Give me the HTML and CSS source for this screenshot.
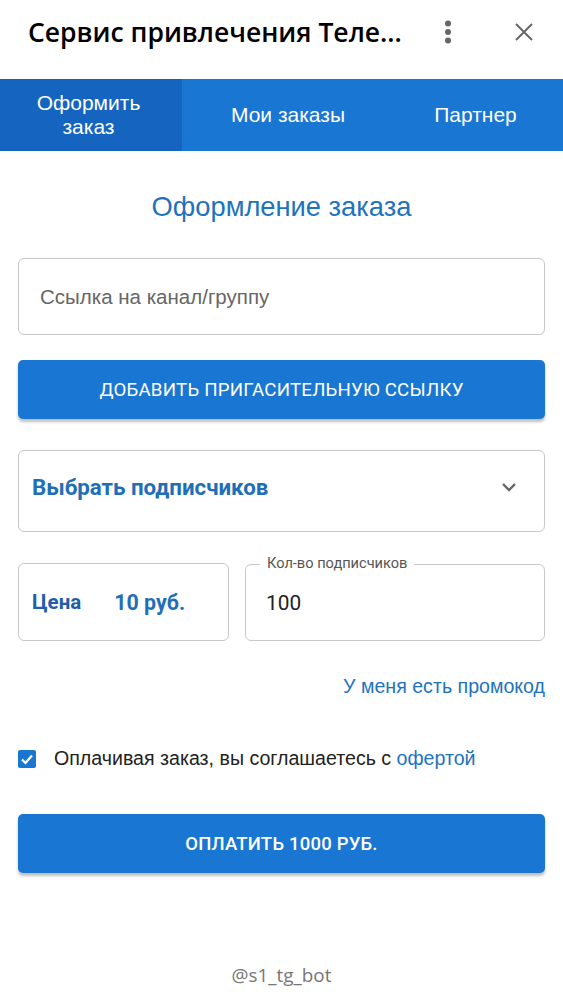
FILE: index.html
```html
<!DOCTYPE html>
<html lang="ru">
<head>
<meta charset="utf-8">
<link rel="stylesheet" href="styles.css">
</head>
<body>
<header class="topbar">
  <h1 class="title">Сервис привлечения Теле...</h1>
  <div class="actions">
    <svg class="kebab" width="8" height="24" viewBox="0 0 8 24"><circle cx="4" cy="3.5" r="3" fill="#666"/><circle cx="4" cy="12" r="3" fill="#666"/><circle cx="4" cy="20.5" r="3" fill="#666"/></svg>
    <svg class="close" width="20" height="20" viewBox="0 0 20 20"><path d="M2 2L18 18M18 2L2 18" stroke="#666" stroke-width="2" fill="none"/></svg>
  </div>
</header>
<nav class="tabs">
  <div class="tab active">Оформить<br>заказ</div>
  <div class="tab">Мои заказы</div>
  <div class="tab">Партнер</div>
</nav>
<main class="content">
  <h2 class="heading">Оформление заказа</h2>
  <div class="field link-field"><span class="placeholder">Ссылка на канал/группу</span></div>
  <button class="btn btn-add">ДОБАВИТЬ ПРИГАСИТЕЛЬНУЮ ССЫЛКУ</button>
  <div class="field select-field">
    <span class="select-label">Выбрать подписчиков</span>
    <svg class="chevron" width="16" height="10" viewBox="0 0 16 10"><path d="M2 2L8 8L14 2" stroke="#666" stroke-width="2.4" fill="none"/></svg>
  </div>
  <div class="row">
    <div class="field price-field"><span class="price-label">Цена</span><span class="price-value">10 руб.</span></div>
    <div class="field qty-field"><span class="legend">Кол-во подписчиков</span><span class="qty-value">100</span></div>
  </div>
  <div class="promo-row"><a class="promo">У меня есть промокод</a></div>
  <label class="agree">
    <span class="checkbox"><svg width="18" height="18" viewBox="0 0 18 18"><path d="M4 9.5L7.5 13L14 5.5" stroke="#fff" stroke-width="2.2" fill="none"/></svg></span>
    <span class="agree-text">Оплачивая заказ, вы соглашаетесь с <a class="offer">офертой</a></span>
  </label>
  <button class="btn btn-pay">ОПЛАТИТЬ 1000 РУБ.</button>
</main>
<footer class="footer">@s1_tg_bot</footer>
</body>
</html>
```
FILE: styles.css
```css
* { box-sizing: border-box; }
html, body { margin: 0; padding: 0; background: #fff; }
body { width: 563px; height: 1000px; font-family: "Liberation Sans", Arial, sans-serif; display: flex; flex-direction: column; }
.topbar { height: 79px; display: flex; align-items: center; justify-content: space-between; padding: 0 28px 0 28px; }
.title { margin: 0; font-family: "Open Sans", sans-serif; font-weight: 600; font-size: 26.5px; color: #000; letter-spacing: 0; margin-top: -16px; }
.actions { display: flex; align-items: center; gap: 62px; margin-top: -16px; margin-right: 1px; }
.kebab { display: block; }
.close { display: block; }
.tabs { height: 72px; background: #1976d2; display: grid; grid-template-columns: 182px 212px 1fr; }
.tab { display: flex; align-items: center; justify-content: center; text-align: center; color: #fff; font-size: 21px; line-height: 24px; }
.tab.active { background: #1565c0; padding-right: 5px; }
.tab:nth-child(3) { padding-right: 6px; }
.content { padding: 0 18px; display: flex; flex-direction: column; }
.heading { margin: 40px 0 0; height: 32px; text-align: center; font-weight: normal; font-size: 27.3px; line-height: 32px; color: #1e73be; }
.field { border: 1px solid #c8c8c8; border-radius: 6px; background: #fff; }
.link-field { margin-top: 35px; height: 77px; display: flex; align-items: center; padding-left: 21px; }
.placeholder { font-size: 20.5px; color: #666; }
.btn { border: none; border-radius: 5px; background: #1976d2; color: #fff; font-family: Roboto, sans-serif; font-weight: 500; font-size: 18.5px; height: 59px; box-shadow: 0 3px 3px rgba(0,0,0,0.25); width: 100%; letter-spacing: 0.2px; }
.btn-add { margin-top: 25px; font-weight: 400; font-size: 18.7px; }
.select-field { margin-top: 31px; height: 82px; display: flex; align-items: center; justify-content: space-between; padding: 0 27px 0 13px; }
.select-label { font-family: Roboto, sans-serif; font-weight: 700; font-size: 22.3px; color: #1f6eb8; margin-top: -8px; }
.chevron { margin-top: -8px; }
.row { margin-top: 31px; display: grid; grid-template-columns: 211px 1fr; gap: 16px; }
.price-field { height: 78px; display: flex; align-items: center; padding-left: 13px; font-family: Roboto, sans-serif; font-weight: 700; font-size: 20.5px; color: #1f5fa8; }
.price-value { margin-left: 33px; color: #1f6eb8; font-size: 21.4px; }
.qty-field { position: relative; height: 77px; margin-top: 1px; display: flex; align-items: center; padding-left: 20px; }
.legend { position: absolute; top: -11px; left: 14px; padding: 0 7px; background: #fff; font-family: Roboto, sans-serif; font-size: 14.6px; color: #555; }
.qty-value { font-family: Roboto, sans-serif; font-size: 20.8px; color: #222; }
.promo-row { margin-top: 34px; display: flex; justify-content: flex-end; }
.promo { font-size: 19.6px; color: #1e73be; }
.agree { margin-top: 49px; display: flex; align-items: center; gap: 18px; }
.checkbox { width: 18px; height: 18px; border-radius: 2px; background: #1976d2; display: block; }
.checkbox svg { display: block; }
.agree-text { font-size: 19.6px; color: #222; }
.offer { color: #1e73be; }
.btn-pay { margin-top: 44px; }
.footer { margin-top: auto; height: 50px; text-align: center; font-family: "Open Sans", sans-serif; font-size: 18.9px; color: #777; padding-top: 12px; }
```
